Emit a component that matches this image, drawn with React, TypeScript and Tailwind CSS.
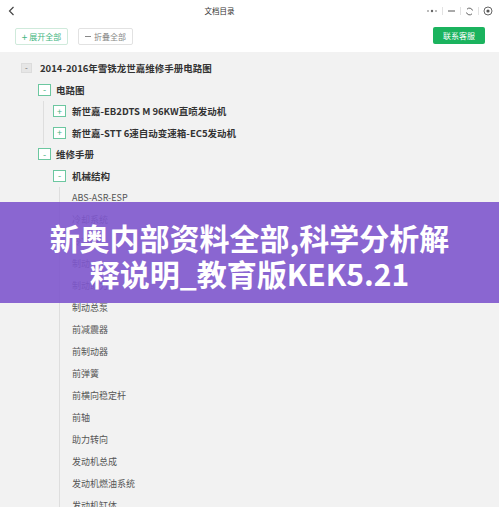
import React from "react";

const font = { fontFamily: '"Noto Sans CJK SC", "Noto Sans", sans-serif' };

function Box({ sign, kind }: { sign: string; kind: "gray" | "green" }) {
  if (kind === "gray") {
    return (
      <div className="w-[11px] h-[10px] shrink-0 bg-[#e6e6e6] border border-[#dcdcdc] flex items-center justify-center text-[8px] leading-none text-[#666]">
        {sign}
      </div>
    );
  }
  return (
    <div className="w-[13px] h-[12px] shrink-0 bg-white border border-[#6cc7a0] flex items-center justify-center text-[9px] leading-none text-[#3fb381]">
      {sign}
    </div>
  );
}

function NodeRow({ sign, kind, label, gap }: { sign: string; kind: "gray" | "green"; label: string; gap: string }) {
  return (
    <div className={`h-[21.5px] flex items-center ${gap}`}>
      <Box sign={sign} kind={kind} />
      <span className="text-[9.5px] font-bold text-[#333] whitespace-nowrap">{label}</span>
    </div>
  );
}

const leaves = [
  "ABS-ASR-ESP",
  "冷却系统",
  "冷凝器",
  "制动",
  "制动助力",
  "制动总泵",
  "前减震器",
  "前制动器",
  "前弹簧",
  "前横向稳定杆",
  "前轴",
  "助力转向",
  "发动机总成",
  "发动机燃油系统",
  "发动机缸体",
  "发动机附件",
];

export default function App() {
  return (
    <div className="w-[499px] h-[507px] overflow-hidden relative bg-[#f2f2f2]" style={font}>
      {/* top bar */}
      <div className="h-[22px] bg-white flex items-center relative">
        <svg className="ml-[8px]" width="7" height="10" viewBox="0 0 7 10">
          <path d="M5.5 1 L1.5 5 L5.5 9" fill="none" stroke="#444" strokeWidth="1.2" />
        </svg>
        <div className="flex-1 flex justify-center">
          <span className="text-[7.5px] text-[#333] ml-[-2px]">文档目录</span>
        </div>
        <div className="flex items-center mr-[6px] text-[#666]">
          <svg width="12" height="6" viewBox="0 0 12 6">
            <circle cx="2" cy="3" r="0.8" fill="#666" />
            <circle cx="6" cy="3" r="1.2" fill="#666" />
            <circle cx="10" cy="3" r="0.8" fill="#666" />
          </svg>
          <div className="w-px h-[8px] bg-[#e2e2e2] mx-[4px]" />
          <svg width="9" height="6" viewBox="0 0 9 6">
            <path d="M1 3 H8" stroke="#555" strokeWidth="1" />
          </svg>
          <div className="w-px h-[8px] bg-[#e2e2e2] mx-[4px]" />
          <svg width="9" height="9" viewBox="0 0 9 9">
            <path d="M7.5 3.5 A3.2 3.2 0 0 0 2 2.2" fill="none" stroke="#555" strokeWidth="0.9" />
            <path d="M1.5 5.5 A3.2 3.2 0 0 0 7 6.8" fill="none" stroke="#555" strokeWidth="0.9" />
          </svg>
          <div className="w-px h-[8px] bg-[#e2e2e2] mx-[4px]" />
          <svg width="10" height="10" viewBox="0 0 10 10">
            <circle cx="5" cy="5" r="4" fill="none" stroke="#555" strokeWidth="0.9" />
            <circle cx="5" cy="5" r="1.6" fill="#555" />
          </svg>
        </div>
      </div>

      {/* button row */}
      <div className="h-[30px] bg-white flex items-start pt-[6px] pl-[15px] pr-[15px]">
        <div className="h-[17px] w-[53px] border border-[#cfeadb] rounded-[2px] flex items-center justify-center text-[8px] text-[#43b67f] gap-[2px]">
          <span className="text-[10px] leading-none">+</span>
          <span>展开全部</span>
        </div>
        <div className="h-[17px] w-[55px] ml-[10px] border border-[#e2e2e2] rounded-[2px] flex items-center justify-center text-[8px] text-[#888] gap-[3px]">
          <span className="w-[6px] h-px bg-[#888]" />
          <span>折叠全部</span>
        </div>
        <div className="flex-1" />
        <div className="h-[17px] w-[52px] mt-[-1px] mr-[-1px] bg-[#1bb35e] rounded-[2px] flex items-center justify-center text-[8px] text-white">
          联系客服
        </div>
      </div>

      {/* tree */}
      <div className="pl-[21px] pt-[5.5px]">
        <NodeRow sign="-" kind="gray" label="2014-2016年雪铁龙世嘉维修手册电路图" gap="gap-[8px]" />
        <div className="pl-[17px]">
          <NodeRow sign="-" kind="green" label="电路图" gap="gap-[5px]" />
          <div className="ml-[5px] border-l border-[#dedede] pl-[9px]">
            <NodeRow sign="+" kind="green" label="新世嘉-EB2DTS M 96KW直喷发动机" gap="gap-[6px]" />
            <NodeRow sign="+" kind="green" label="新世嘉-STT 6速自动变速箱-EC5发动机" gap="gap-[6px]" />
          </div>
          <NodeRow sign="-" kind="green" label="维修手册" gap="gap-[5px]" />
          <div className="ml-[15px]">
            <NodeRow sign="-" kind="green" label="机械结构" gap="gap-[6px]" />
            <div className="ml-[6px] border-l border-[#dedede] pl-[12px]">
              {leaves.map((l) => (
                <div key={l} className="h-[22px] flex items-center text-[9px] text-[#555] whitespace-nowrap">
                  {l}
                </div>
              ))}
            </div>
          </div>
        </div>
      </div>

      {/* overlay banner */}
      <div className="absolute left-0 right-0 top-[202px] h-[101px] bg-[#7e56cd]/90 flex flex-col items-center justify-center pt-[4px]">
        <div className="text-[30px] leading-[36px] font-bold text-white whitespace-nowrap">新奥内部资料全部,科学分析解</div>
        <div className="text-[30px] leading-[36px] font-bold text-white whitespace-nowrap">释说明_教育版KEK5.21</div>
      </div>
    </div>
  );
}
